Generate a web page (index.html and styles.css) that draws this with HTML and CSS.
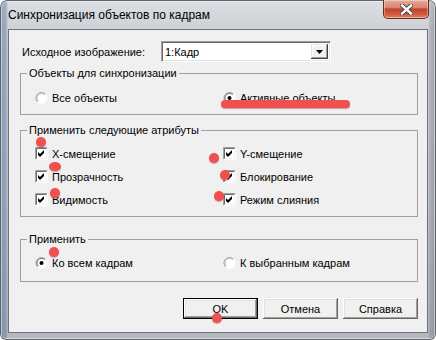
FILE: index.html
```html
<!DOCTYPE html>
<html lang="ru">
<head>
    <meta charset="UTF-8">
    <title>Синхронизация объектов по кадрам</title>
    <link rel="stylesheet" href="styles.css">
</head>
<body>
    <div class="window">
        <div class="titlebar">
            <span class="title">Синхронизация объектов по кадрам</span>
            <div class="close-btn">
                <svg width="13" height="11" viewBox="0 0 13 11">
                    <path d="M2 1.5 L11 9.5 M11 1.5 L2 9.5" stroke="#3b3b3b" stroke-width="4.2" stroke-linecap="square"/>
                    <path d="M2 1.5 L11 9.5 M11 1.5 L2 9.5" stroke="#fff" stroke-width="2.4" stroke-linecap="square"/>
                </svg>
            </div>
        </div>

        <div class="client">
            <div class="source-row">
                <span class="source-label">Исходное изображение:</span>
                <div class="combo">
                    <span class="combo-value">1:Кадр</span>
                    <span class="combo-btn">
                        <svg width="7" height="4" viewBox="0 0 7 4"><path d="M0 0 H7 L3.5 4 Z" fill="#000"/></svg>
                    </span>
                </div>
            </div>

            <fieldset class="group group-objects">
                <legend>Объекты для синхронизации</legend>
                <div class="options">
                    <label class="option">
                        <svg class="radio" width="13" height="12" viewBox="0 0 12 12">
                            <circle cx="6" cy="6" r="5.5" fill="#fff"/>
                            <path d="M2.1 9.9 A5.5 5.5 0 0 1 9.9 2.1" fill="none" stroke="#a0a0a0"/>
                            <path d="M9.9 2.1 A5.5 5.5 0 0 1 2.1 9.9" fill="none" stroke="#fff"/>
                            <path d="M2.8 9.2 A4.5 4.5 0 0 1 9.2 2.8" fill="none" stroke="#b8b8b8"/>
                        </svg>
                        <span>Все объекты</span>
                    </label>
                    <label class="option">
                        <svg class="radio" width="13" height="12" viewBox="0 0 12 12">
                            <circle cx="6" cy="6" r="5.5" fill="#fff"/>
                            <path d="M2.1 9.9 A5.5 5.5 0 0 1 9.9 2.1" fill="none" stroke="#a0a0a0"/>
                            <path d="M9.9 2.1 A5.5 5.5 0 0 1 2.1 9.9" fill="none" stroke="#fff"/>
                            <path d="M2.8 9.2 A4.5 4.5 0 0 1 9.2 2.8" fill="none" stroke="#696969"/>
                            <circle cx="6" cy="6" r="2" fill="#000"/>
                        </svg>
                        <span>Активные объекты</span>
                    </label>
                </div>
            </fieldset>

            <fieldset class="group group-attrs">
                <legend>Применить следующие атрибуты</legend>
                <div class="options">
                    <label class="option">
                        <svg class="check" width="13" height="13" viewBox="0 0 13 13">
                            <path d="M0.5 12.5 V0.5 H12.5" fill="none" stroke="#a0a0a0"/>
                            <path d="M0.5 12.5 H12.5 V0.5" fill="none" stroke="#fff"/>
                            <path d="M1.5 11.5 V1.5 H11.5" fill="none" stroke="#696969"/>
                            <rect x="2" y="2" width="9" height="9" fill="#fff"/>
                            <path d="M3 5 L5 7 L9 3 V6 L5 10 L3 8 Z" fill="#000"/>
                        </svg>
                        <span>Х-смещение</span>
                    </label>
                    <label class="option">
                        <svg class="check" width="13" height="13" viewBox="0 0 13 13">
                            <path d="M0.5 12.5 V0.5 H12.5" fill="none" stroke="#a0a0a0"/>
                            <path d="M0.5 12.5 H12.5 V0.5" fill="none" stroke="#fff"/>
                            <path d="M1.5 11.5 V1.5 H11.5" fill="none" stroke="#696969"/>
                            <rect x="2" y="2" width="9" height="9" fill="#fff"/>
                            <path d="M3 5 L5 7 L9 3 V6 L5 10 L3 8 Z" fill="#000"/>
                        </svg>
                        <span>Y-смещение</span>
                    </label>
                    <label class="option">
                        <svg class="check" width="13" height="13" viewBox="0 0 13 13">
                            <path d="M0.5 12.5 V0.5 H12.5" fill="none" stroke="#a0a0a0"/>
                            <path d="M0.5 12.5 H12.5 V0.5" fill="none" stroke="#fff"/>
                            <path d="M1.5 11.5 V1.5 H11.5" fill="none" stroke="#696969"/>
                            <rect x="2" y="2" width="9" height="9" fill="#fff"/>
                            <path d="M3 5 L5 7 L9 3 V6 L5 10 L3 8 Z" fill="#000"/>
                        </svg>
                        <span>Прозрачность</span>
                    </label>
                    <label class="option">
                        <svg class="check" width="13" height="13" viewBox="0 0 13 13">
                            <path d="M0.5 12.5 V0.5 H12.5" fill="none" stroke="#a0a0a0"/>
                            <path d="M0.5 12.5 H12.5 V0.5" fill="none" stroke="#fff"/>
                            <path d="M1.5 11.5 V1.5 H11.5" fill="none" stroke="#696969"/>
                            <rect x="2" y="2" width="9" height="9" fill="#fff"/>
                            <path d="M3 5 L5 7 L9 3 V6 L5 10 L3 8 Z" fill="#000"/>
                        </svg>
                        <span>Блокирование</span>
                    </label>
                    <label class="option">
                        <svg class="check" width="13" height="13" viewBox="0 0 13 13">
                            <path d="M0.5 12.5 V0.5 H12.5" fill="none" stroke="#a0a0a0"/>
                            <path d="M0.5 12.5 H12.5 V0.5" fill="none" stroke="#fff"/>
                            <path d="M1.5 11.5 V1.5 H11.5" fill="none" stroke="#696969"/>
                            <rect x="2" y="2" width="9" height="9" fill="#fff"/>
                            <path d="M3 5 L5 7 L9 3 V6 L5 10 L3 8 Z" fill="#000"/>
                        </svg>
                        <span>Видимость</span>
                    </label>
                    <label class="option">
                        <svg class="check" width="13" height="13" viewBox="0 0 13 13">
                            <path d="M0.5 12.5 V0.5 H12.5" fill="none" stroke="#a0a0a0"/>
                            <path d="M0.5 12.5 H12.5 V0.5" fill="none" stroke="#fff"/>
                            <path d="M1.5 11.5 V1.5 H11.5" fill="none" stroke="#696969"/>
                            <rect x="2" y="2" width="9" height="9" fill="#fff"/>
                            <path d="M3 5 L5 7 L9 3 V6 L5 10 L3 8 Z" fill="#000"/>
                        </svg>
                        <span>Режим слияния</span>
                    </label>
                </div>
            </fieldset>

            <fieldset class="group group-apply">
                <legend>Применить</legend>
                <div class="options">
                    <label class="option">
                        <svg class="radio" width="13" height="12" viewBox="0 0 12 12">
                            <circle cx="6" cy="6" r="5.5" fill="#fff"/>
                            <path d="M2.1 9.9 A5.5 5.5 0 0 1 9.9 2.1" fill="none" stroke="#a0a0a0"/>
                            <path d="M9.9 2.1 A5.5 5.5 0 0 1 2.1 9.9" fill="none" stroke="#fff"/>
                            <path d="M2.8 9.2 A4.5 4.5 0 0 1 9.2 2.8" fill="none" stroke="#696969"/>
                            <circle cx="6" cy="6" r="2" fill="#000"/>
                        </svg>
                        <span>Ко всем кадрам</span>
                    </label>
                    <label class="option">
                        <svg class="radio" width="13" height="12" viewBox="0 0 12 12">
                            <circle cx="6" cy="6" r="5.5" fill="#fff"/>
                            <path d="M2.1 9.9 A5.5 5.5 0 0 1 9.9 2.1" fill="none" stroke="#a0a0a0"/>
                            <path d="M9.9 2.1 A5.5 5.5 0 0 1 2.1 9.9" fill="none" stroke="#fff"/>
                            <path d="M2.8 9.2 A4.5 4.5 0 0 1 9.2 2.8" fill="none" stroke="#b8b8b8"/>
                        </svg>
                        <span>К выбранным кадрам</span>
                    </label>
                </div>
            </fieldset>

            <div class="buttons">
                <button type="button" class="btn btn-default">OK</button>
                <button type="button" class="btn">Отмена</button>
                <button type="button" class="btn">Справка</button>
            </div>
        </div>

        <!-- red annotation marks drawn over the dialog -->
        <div class="mark-line"></div>
        <div class="mark mark-1"></div>
        <div class="mark mark-2"></div>
        <div class="mark mark-3"></div>
        <div class="mark mark-4"></div>
        <div class="mark mark-5"></div>
        <div class="mark mark-6"></div>
        <div class="mark mark-7"></div>
        <div class="mark mark-8"></div>
    </div>
</body>
</html>
```

FILE: styles.css
```css
* {
    margin: 0;
    padding: 0;
    box-sizing: border-box;
}

body {
    font-family: 'Liberation Sans', Arial, sans-serif;
    font-size: 11px;
    color: #000;
    background: #fff;
    width: 436px;
    height: 340px;
    overflow: hidden;
}

.window {
    position: relative;
    width: 436px;
    height: 340px;
    border-radius: 7px 7px 6px 6px;
    background:
        linear-gradient(90deg, rgba(60, 100, 150, 0.45) 0, rgba(60, 100, 150, 0.35) 6px, transparent 8px),
        linear-gradient(270deg, rgba(70, 75, 85, 0.35) 0, rgba(70, 75, 85, 0.2) 6px, transparent 8px),
        linear-gradient(180deg, #dcdfe3 0%, #cdd1d6 9%, #c2c6cc 60%, #b4b9bf 100%);
    box-shadow: inset 0 0 0 1px #5f646a, inset 0 0 0 2px rgba(255, 255, 255, 0.45);
}

.titlebar {
    display: flex;
    height: 29px;
    padding-left: 8px;
}

.title {
    align-self: center;
    font-size: 12px;
    margin-top: 1px;
}

.close-btn {
    margin-left: auto;
    margin-right: 7px;
    width: 46px;
    height: 19px;
    display: flex;
    align-items: center;
    justify-content: center;
    border: 1px solid #6b2b20;
    border-top: none;
    border-radius: 0 0 5px 5px;
    background: linear-gradient(180deg, #e7ab9c 0%, #d88471 42%, #c2432a 50%, #cf5a3e 80%, #e08a6c 100%);
    box-shadow: inset 0 0 0 1px rgba(255, 255, 255, 0.35);
}

.client {
    margin: 0 8px;
    height: 304px;
    border: 1px solid #6f747a;
    background: #f0f0f0;
    padding: 11px 9px 0 11px;
}

.source-row {
    display: flex;
    align-items: center;
    height: 21px;
}

.source-label {
    width: 141px;
    padding-left: 2px;
}

.combo {
    width: 170px;
    height: 21px;
    display: flex;
    align-items: center;
    padding: 2px;
    background: #fff;
    border: 1px solid;
    border-color: #a0a0a0 #fff #fff #a0a0a0;
    box-shadow: inset 1px 1px #696969, inset -1px -1px #e3e3e3;
}

.combo-value {
    flex: 1;
    padding-left: 1px;
}

.combo-btn {
    width: 17px;
    height: 15px;
    display: flex;
    align-items: center;
    justify-content: center;
    background: #f0f0f0;
    box-shadow: inset -1px -1px #404040, inset 1px 1px #e3e3e3, inset -2px -2px #a0a0a0, inset 2px 2px #fff;
}

.group {
    border: 1px solid #a0a0a0;
    padding-left: 14px;
}

.group legend {
    margin-left: -8px;
    padding: 0 2px;
    line-height: 13px;
}

.group-objects {
    margin-top: 5px;
    padding-top: 11px;
    padding-bottom: 10px;
}

.group-attrs {
    margin-top: 9px;
    padding-top: 10px;
    padding-bottom: 10px;
}

.group-apply {
    margin-top: 16px;
    padding-top: 10px;
    padding-bottom: 12px;
}

.options {
    display: grid;
    grid-template-columns: 188px 1fr;
    row-gap: 10px;
}

.option {
    display: flex;
    align-items: center;
    gap: 4px;
    height: 13px;
}

.option svg {
    flex: none;
}

.buttons {
    display: flex;
    justify-content: flex-end;
    gap: 5px;
    margin-top: 16px;
}

.btn {
    width: 75px;
    height: 21px;
    font-family: inherit;
    font-size: 11px;
    font-weight: normal;
    color: #000;
    border: none;
    background: #f0f0f0;
    box-shadow: inset -1px -1px #696969, inset 1px 1px #fff, inset -2px -2px #a0a0a0, inset 2px 2px #e3e3e3;
}

.btn-default {
    box-shadow: inset 0 0 0 1px #000, inset -2px -2px #696969, inset 2px 2px #fff, inset -3px -3px #a0a0a0, inset 3px 3px #e3e3e3;
}

.mark-line {
    position: absolute;
    left: 221px;
    top: 100px;
    width: 129px;
    height: 8px;
    border-radius: 4px;
    background: #f24f4f;
    box-shadow: 0 1px 1px rgba(110, 0, 0, 0.35);
}

.mark {
    position: absolute;
    width: 10px;
    height: 10px;
    border-radius: 50%;
    background: #f24f4f;
    box-shadow: 0 1px 1px rgba(110, 0, 0, 0.35);
}

.mark-1 { left: 36px; top: 137px; }
.mark-2 { left: 49px; top: 162px; width: 12px; height: 9px; }
.mark-3 { left: 50px; top: 188px; }
.mark-4 { left: 209px; top: 153px; }
.mark-5 { left: 220px; top: 170px; }
.mark-6 { left: 214px; top: 191px; }
.mark-7 { left: 49px; top: 247px; }
.mark-8 { left: 212px; top: 313px; }
```
